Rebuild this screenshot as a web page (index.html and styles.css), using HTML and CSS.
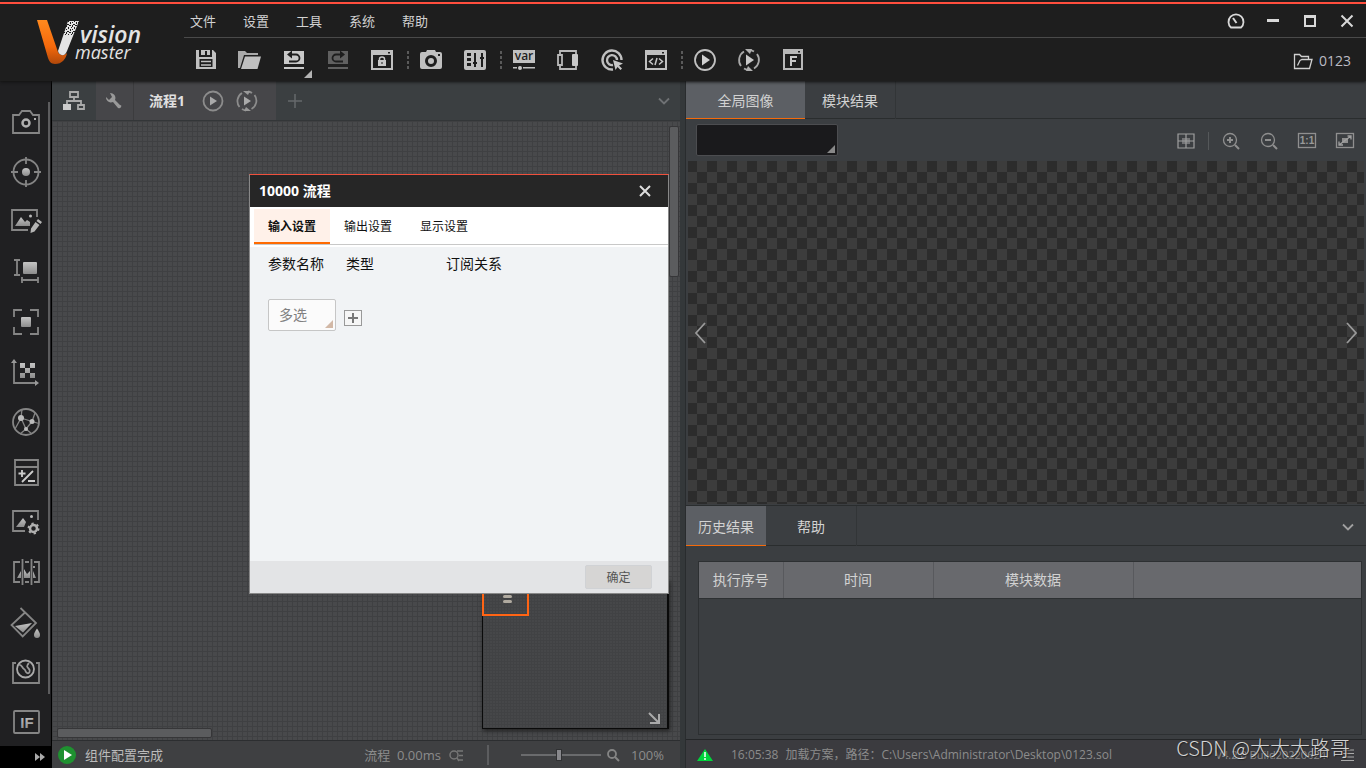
FILE: index.html
```html
<!DOCTYPE html>
<html lang="zh-CN">
<head>
<meta charset="utf-8">
<meta name="viewport" content="width=device-width, initial-scale=1">
<title>VisionMaster</title>
<link rel="stylesheet" href="styles.css">
</head>
<body>
<svg width="0" height="0" class="defs" aria-hidden="true">
  <defs>
    <linearGradient id="metal" x1="0" y1="0" x2="0" y2="1"><stop offset="0" stop-color="#c4c4c4"/><stop offset="1" stop-color="#8c8c8c"/></linearGradient>
    <linearGradient id="flame" x1="0" y1="0" x2="0" y2="1"><stop offset="0" stop-color="#ff8a1e"/><stop offset=".6" stop-color="#f5690c"/><stop offset="1" stop-color="#b0480a"/></linearGradient>
    <pattern id="grain" width="6" height="7" patternUnits="userSpaceOnUse"><path d="M0 0h1v2H0zM3 0h2v1H3zM5 2h1v1H5zM2 2h1v2H2zM0 4h1v1H0zM4 4h1v2H4zM1 6h2v1H1z" fill="#1e1e1e"/></pattern>
  </defs>
</svg>
<div class="app">
  <header class="header">
    <div class="brand">
      <svg class="logo" viewBox="0 0 112 50" role="img" aria-label="Vision Master">
        <path d="M1 2h10L22 34c2 4 6 4 9 1-1 6-5 11-12 11-4 0-6-3-7-6z" fill="url(#flame)"/>
        <path d="M32 3h11L31 33c-2 6-8 5-9 0z" fill="#e4e4e4"/>
        <path d="M32 2h12l-5 15H27z" fill="url(#grain)"/>
        <text x="44" y="25" class="logo-top">vision</text>
        <text x="39" y="41" class="logo-bottom">master</text>
      </svg>
    </div>
    <div class="header-main">
      <div class="menu-row">
        <nav class="menu" aria-label="主菜单">
          <button>文件</button><button>设置</button><button>工具</button><button>系统</button><button>帮助</button>
        </nav>
        <div class="window-buttons">
          <button aria-label="性能"><svg viewBox="0 0 20 20"><path d="M5 16.500A7.500 7.500 0 1 1 15 16.500z" fill="none" stroke="#d8d8d8" stroke-width="1.800"/><path d="M7 7l3.500 5" stroke="#d8d8d8" stroke-width="2"/></svg></button>
          <button aria-label="最小化"><svg viewBox="0 0 20 20"><path d="M4 8h12v3H4z" fill="#d8d8d8"/></svg></button>
          <button aria-label="最大化"><svg viewBox="0 0 20 20"><path d="M4 4h12v12H4zM6 7v7h8V7z" fill="#d8d8d8" fill-rule="evenodd"/></svg></button>
          <button aria-label="关闭"><svg viewBox="0 0 20 20"><path d="M4.500 4.500l11 11M15.500 4.500l-11 11" stroke="#d8d8d8" stroke-width="2"/></svg></button>
        </div>
      </div>
      <div class="tool-row">
        <div class="tools">
          <button aria-label="保存"><svg viewBox="0 0 24 24"><path d="M2 2h3v7h13V2h1l3 3v16H2z" fill="#c0c0c0"/><path d="M7 2h9v5h-3V3h-2v4H7z" fill="#c0c0c0"/><path d="M5.500 11h13v8h-13z" fill="#1e1e1e"/><path d="M7 13.500h10M7 17h10" stroke="#c0c0c0" stroke-width="1.500"/></svg></button>
          <button aria-label="打开"><svg viewBox="0 0 24 24"><path d="M0 3h7l2 2h11v2H6L2 20H0z" fill="#aaa"/><path d="M7 8.500h16L19.500 21H3z" fill="#c0c0c0"/></svg></button>
          <button class="has-corner" aria-label="撤销"><svg viewBox="0 0 24 24"><path d="M2 3h20v13H2zM2 19h20v2H2z" fill="#c8c8c8"/><path d="M9 6.500h5a3.500 3.500 0 0 1 0 7H7" fill="none" stroke="#1e1e1e" stroke-width="1.800"/><path d="M5 6.500l5-4v8z" fill="#1e1e1e"/></svg></button>
          <button aria-label="重做"><svg viewBox="0 0 24 24"><path d="M2 3h20v13H2zM2 19h20v2H2z" fill="#606060"/><path d="M15 6.500h-5a3.500 3.500 0 0 0 0 7h7" fill="none" stroke="#1e1e1e" stroke-width="1.800"/><path d="M19 6.500l-5-4v8z" fill="#1e1e1e"/></svg></button>
          <button aria-label="锁定"><svg viewBox="0 0 24 24"><path d="M1 2h22v20H1zM3 7v13h18V7zM18 4v1.500h2V4z" fill="#c0c0c0" fill-rule="evenodd"/><path d="M8 12h8v6H8z" fill="#c8c8c8"/><path d="M9.500 12v-1a2.500 2 0 0 1 5 0v1" stroke="#c8c8c8" stroke-width="1.500" fill="none"/><path d="M11.500 14h1v2h-1z" fill="#1e1e1e"/></svg></button>
          <i class="tool-sep"></i>
          <button aria-label="相机"><svg viewBox="0 0 24 24"><path d="M1 6q0-2 2-2h4l1-2h8l1 2h4q2 0 2 2v13q0 2-2 2H3q-2 0-2-2z" fill="#c0c0c0"/><circle cx="12" cy="13" r="4.500" fill="none" stroke="#1e1e1e" stroke-width="3"/><path d="M19 6h2v2h-2z" fill="#1e1e1e"/></svg></button>
          <button aria-label="控制器"><svg viewBox="0 0 24 24"><rect x="1" y="2" width="22" height="20" rx="2" fill="#c0c0c0"/><path d="M4 5h4v3H4zM4 10h4v3H4zM4 15h4v3H4z" fill="#1e1e1e"/><path d="M12 5v14M19 5v14M10 15h4M17 10h4" stroke="#1e1e1e" stroke-width="2"/></svg></button>
          <i class="tool-sep"></i>
          <button aria-label="变量"><svg viewBox="0 0 24 24"><path d="M1 2h22v13H1zM1 19h4v1.500H1zM11 19h12v1.500H11z" fill="#c0c0c0"/><circle cx="8" cy="20" r="2" fill="#c8c8c8"/><text x="12" y="12" class="glyph-var">var</text></svg></button>
          <button aria-label="通信"><svg viewBox="0 0 24 24"><path d="M2 7h4v10H2zM4 7V3h16v3M4 17v4h16v-3" fill="none" stroke="#b8b8b8" stroke-width="1.800"/><rect x="16" y="6" width="6" height="12" rx="1" fill="#c8c8c8"/></svg></button>
          <button aria-label="触发"><svg viewBox="0 0 24 24"><path d="M21.500 12A9.500 9.500 0 1 0 13 21.500M17 12a5 5 0 1 0-4 5" fill="none" stroke="#c0c0c0" stroke-width="2.400"/><path d="M13 12l10 3.500-4 2 3 3-1.500 1.500-3-3-2 3z" fill="#c8c8c8"/></svg></button>
          <button aria-label="脚本"><svg viewBox="0 0 24 24"><path d="M1 2h22v20H1zM3 7v13h18V7zM18 4v1.500h2V4z" fill="#c0c0c0" fill-rule="evenodd"/><path d="M9 10.500l-3.500 3L9 16.500M15 10.500l3.500 3-3.500 3M13 10l-2 7" fill="none" stroke="#c8c8c8" stroke-width="1.500"/></svg></button>
          <i class="tool-sep"></i>
          <button aria-label="单次运行"><svg viewBox="0 0 24 24"><circle cx="12" cy="12" r="10" fill="none" stroke="#c0c0c0" stroke-width="1.800"/><path d="M9 6.500l8 5.500-8 5.500z" fill="#d0d0d0"/></svg></button>
          <button aria-label="连续运行"><svg viewBox="0 0 24 24"><path d="M13 2.200a10 10 0 0 1 4 1.300M20 6a10 10 0 0 1-3 14.500M11 21.800a10 10 0 0 1-4-1.300M4 18A10 10 0 0 1 7 3.500" fill="none" stroke="#a8a8a8" stroke-width="1.800"/><path d="M8 1h7l-2 5zM16 23H9l2-5z" fill="#b0b0b0"/><path d="M9 6.500l8 5.500-8 5.500z" fill="#c8c8c8"/></svg></button>
          <button aria-label="前端界面"><svg viewBox="0 0 24 24"><path d="M2 1h20v21H2zM4 6v14h16V6zM17 3v1.500h2V3z" fill="#b8b8b8" fill-rule="evenodd"/><path d="M10 18V9h6M10 13h5" fill="none" stroke="#c8c8c8" stroke-width="2"/></svg></button>
        </div>
        <a href="#" class="project"><svg viewBox="0 0 20 18"><path d="M4.500 16.500H1.500v-14h5l2 2h7v3M4.500 16.500h12l2.500-9H9l-2 1-2.500 5" fill="none" stroke="#d0d0d0" stroke-width="1.300"/></svg>0123</a>
      </div>
    </div>
  </header>

  <aside class="sidebar">
    <div class="modules">
      <button aria-label="采集"><svg viewBox="0 0 32 32"><path d="M3 9h6l3-4h8l3 4h6v18H3z" class="ln"/><circle cx="16" cy="17" r="3.500" fill="none" stroke="#b0b0b0" stroke-width="2.500"/><path d="M24 12h2v2h-2z" fill="#b0b0b0"/></svg></button>
      <button aria-label="定位"><svg viewBox="0 0 32 32"><circle cx="16" cy="16" r="12.500" class="ln"/><path d="M16 1v7M16 24v7M1 16h7M24 16h7" class="ln"/><circle cx="16" cy="16" r="4" fill="url(#metal)"/></svg></button>
      <button aria-label="图像编辑"><svg viewBox="0 0 32 32"><path d="M27 11V4H2v20h16" class="ln"/><path d="M5 20l6-9 4 5 2-2 3 2v4z" fill="url(#metal)"/><circle cx="20.500" cy="10" r="1.500" fill="#bbb"/><path d="M28 13l4 3-1.500 2-4-3zM25.500 16l4 3-5 6.500-4 1.500.5-4.500z" fill="#b4b4b4"/></svg></button>
      <button aria-label="测量"><svg viewBox="0 0 32 32"><path d="M4 4h6M4 19h6M7 4v15M11 24h17M12 21v6M28 21v6" class="ln"/><rect x="13" y="6" width="14" height="12" rx="1" fill="url(#metal)"/></svg></button>
      <button aria-label="识别"><svg viewBox="0 0 32 32"><path d="M4 11V4h8M20 4h8v7M28 21v7h-8M12 28H4v-7" class="ln"/><rect x="11" y="11" width="10" height="10" rx="1" fill="url(#metal)"/></svg></button>
      <button aria-label="标定"><svg viewBox="0 0 32 32"><path d="M4 5v22h23" class="ln"/><path d="M1 7l3-4 3 4zM25 24l4 3-4 3z" fill="#999"/><path d="M10 7h5v5h-5zM20 7h5v5h-5zM15 12h5v5h-5zM10 17h5v5h-5zM20 17h5v5h-5z" fill="url(#metal)"/></svg></button>
      <button aria-label="深度学习"><svg viewBox="0 0 32 32"><circle cx="16" cy="16" r="13" class="ln"/><path d="M12 3l-1 9-6 11M11 12l11 3.500-6 7.500-5-11M22 15.500L25 7M22 15.500l7 2M16 23l-6 5M16 23l6 5" class="ln thin"/><circle cx="11" cy="12" r="3" fill="#bbb"/><circle cx="22" cy="15.500" r="2.500" fill="#bbb"/><circle cx="16" cy="23" r="2" fill="#bbb"/></svg></button>
      <button aria-label="运算"><svg viewBox="0 0 32 32"><path d="M5 4h23v25H5zM5 11h23" class="ln"/><path d="M8.500 17.500h7M12 14v7M12 26l11-11M18 25h7" stroke="#ccc" stroke-width="1.800" fill="none"/></svg></button>
      <button aria-label="图像处理"><svg viewBox="0 0 32 32"><path d="M28 14V5H3v20h12" class="ln"/><path d="M6 21l7-9 3 4-2 5z" fill="url(#metal)"/><circle cx="21.500" cy="10.500" r="1.500" fill="#bbb"/><circle cx="23.500" cy="22.500" r="3.500" fill="none" stroke="#b0b0b0" stroke-width="2.500"/><circle cx="23.500" cy="22.500" r="5" fill="none" stroke="#b0b0b0" stroke-width="2" stroke-dasharray="2.200 3.036"/></svg></button>
      <button aria-label="缺陷检测"><svg viewBox="0 0 32 32"><path d="M10 6H4v20h6M15 6h4M15 26h4M24 6h5v20h-5M12.500 3v26M21.500 3v26" class="ln"/><path d="M7 22l4-7v7zM14 22v-9l3 5 3-3v7zM23 22v-7l3 7z" fill="url(#metal)"/><circle cx="24" cy="11" r="1" fill="#bbb"/></svg></button>
      <button aria-label="颜色处理"><svg viewBox="0 0 32 32"><path d="M10.500 2L26 17 12.700 30.500 1.500 19 15 6.500" class="ln"/><path d="M5 20l17-3-9 9.500z" fill="url(#metal)"/><path d="M27 22.500c2 3 3 4.500 3 6.500a3 3 0 0 1-6 0c0-2 1-3.500 3-6.500z" fill="url(#metal)"/></svg></button>
      <button aria-label="逻辑工具"><svg viewBox="0 0 32 32"><path d="M6 7H3v20h26V7h-3" class="ln"/><circle cx="15.500" cy="13" r="8.500" fill="none" stroke="#aaa" stroke-width="1.800"/><path d="M9 9c3-1 3 3 5 4s1 3 3 4 4-2 2-4-3-3 0-6" fill="none" stroke="#999" stroke-width="1.800"/></svg></button>
      <button aria-label="条件分支"><svg viewBox="0 0 32 32"><rect x="4" y="5" width="25" height="22" rx="1" class="ln"/><text x="17" y="22" class="glyph-if">IF</text></svg></button>
    </div>
    <button class="expand" aria-label="展开"><svg viewBox="0 0 12 8"><path d="M1 0l5 4-5 4zM6 0l5 4-5 4z" fill="#aaa"/></svg></button>
    <div class="side-scroll"></div>
  </aside>

  <main class="workspace">
    <div class="flow-tabs">
      <button class="tree" aria-label="流程树"><svg viewBox="0 0 24 24"><path d="M8 3h8v5H8zM12 8v4M5 16v-4h14v4M16 16h6v4h-6z" fill="none" stroke="#aaa" stroke-width="1.800"/><path d="M1 15h8v6H1z" fill="#ccc"/></svg></button>
      <div class="flow-active">
        <button class="wrench" aria-label="设置"><svg viewBox="0 0 20 20"><path d="M3 6a5 5 0 0 0 7 5l5 6q2 1 3-1t-1-2l-5-5a5 5 0 0 0-5-7l2 4-3 3z" fill="#999"/></svg></button>
        <button class="flow-name">流程1</button>
        <button class="run" aria-label="运行"><svg viewBox="0 0 24 24"><circle cx="12" cy="12" r="9.500" fill="none" stroke="#8c8c8c" stroke-width="1.800"/><path d="M9 7.500l7 4.500-7 4.500z" fill="#aaa"/></svg></button>
        <button class="run" aria-label="循环运行"><svg viewBox="0 0 24 24"><path d="M13 2.500a9.500 9.500 0 0 1 4 1.500M19.500 6a9.500 9.500 0 0 1-3 14M11 21.500A9.500 9.500 0 0 1 7 20M4.500 18A9.500 9.500 0 0 1 7 4" fill="none" stroke="#8c8c8c" stroke-width="1.800"/><path d="M8 2h7l-2 4zM16 22H9l2-4z" fill="#999"/><path d="M9 7.500l7 4.500-7 4.500z" fill="#aaa"/></svg></button>
      </div>
      <button class="add" aria-label="新建流程"><svg viewBox="0 0 16 16"><path d="M8 1v14M1 8h14" stroke="#66696b" stroke-width="1.500"/></svg></button>
      <button class="more" aria-label="更多流程"><svg viewBox="0 0 14 14"><path d="M2 4.500l5 5 5-5" fill="none" stroke="#6f7274" stroke-width="1.800"/></svg></button>
    </div>
    <div class="canvas">
      <div class="bar-v"></div>
      <div class="bar-h"></div>
      <div class="minimap">
        <div class="viewport"><i></i><i></i></div>
        <svg class="shrink" viewBox="0 0 14 14"><path d="M2 2l9 9M12 3v9H3" fill="none" stroke="#aaa" stroke-width="2"/></svg>
      </div>
    </div>
    <footer class="flow-status">
      <svg class="ok" viewBox="0 0 20 20"><circle cx="10" cy="10" r="9" fill="#1f9130"/><path d="M7 5l8 5-8 5z" fill="#fff"/></svg>
      <span class="state">组件配置完成</span>
      <span class="timing">流程&nbsp; 0.00ms</span>
      <svg class="detail" viewBox="0 0 16 14"><circle cx="5" cy="7" r="4" fill="none" stroke="#777" stroke-width="1.500"/><path d="M8 10l2 3M8 3h6M10 7.500h4M10 12h4" stroke="#777" stroke-width="1.500"/></svg>
      <i class="bar"></i>
      <input type="range" min="0" max="100" value="47" aria-label="缩放">
      <svg class="lens" viewBox="0 0 14 14"><circle cx="6" cy="6" r="4" fill="none" stroke="#858585" stroke-width="1.800"/><path d="M9 9l4 4" stroke="#858585" stroke-width="2"/></svg>
      <span class="percent">100%</span>
    </footer>

    <section class="dialog" role="dialog" aria-labelledby="dlg-title">
      <header class="dialog-head"><h2 id="dlg-title">10000 流程</h2><button aria-label="关闭对话框"><svg viewBox="0 0 14 14"><path d="M2 2l10 10M12 2L2 12" stroke="#ddd" stroke-width="2"/></svg></button></header>
      <div class="dialog-tabs"><button class="on">输入设置</button><button>输出设置</button><button>显示设置</button></div>
      <div class="dialog-body">
        <div class="params"><span>参数名称</span><span>类型</span><span>订阅关系</span></div>
        <div class="pick">
          <div class="type-pick"><select aria-label="类型"><option>多选</option></select></div>
          <button class="plus" aria-label="添加参数"><svg viewBox="0 0 18 16"><rect x=".5" y=".5" width="17" height="15" fill="#f6f6f6" stroke="#999"/><path d="M9 3v10M4 8h10" stroke="#777" stroke-width="2"/></svg></button>
        </div>
      </div>
      <footer class="dialog-foot"><button>确定</button></footer>
    </section>
  </main>

  <section class="results">
    <div class="view-tabs"><button class="on">全局图像</button><button>模块结果</button></div>
    <div class="view-tools">
      <div class="source-pick"><select aria-label="图像源"><option></option></select></div>
      <div class="view-icons">
        <button aria-label="网格"><svg viewBox="0 0 20 18"><path d="M2 2h16v14H2zM10 2v14M2 9h16" fill="none" stroke="#a0a0a0" stroke-width="1.200"/><path d="M6 6h8v6H6z" fill="#999" opacity=".6"/></svg></button>
        <i class="vsep"></i>
        <button aria-label="放大"><svg viewBox="0 0 20 18"><circle cx="9" cy="8" r="6.500" fill="none" stroke="#8f8f8f" stroke-width="1.300"/><path d="M14 13l4 4M6 8h6M9 5v6" stroke="#8f8f8f" stroke-width="2"/></svg></button>
        <button aria-label="缩小"><svg viewBox="0 0 20 18"><circle cx="9" cy="8" r="6.500" fill="none" stroke="#8f8f8f" stroke-width="1.300"/><path d="M14 13l4 4M6 8h6" stroke="#8f8f8f" stroke-width="2"/></svg></button>
        <button aria-label="原始大小"><svg viewBox="0 0 20 18"><rect x="1.500" y="1.500" width="17" height="14" fill="none" stroke="#8f8f8f" stroke-width="1.300"/><text x="10" y="12" class="glyph-one">1:1</text></svg></button>
        <button aria-label="适应窗口"><svg viewBox="0 0 20 18"><rect x="1.500" y="1.500" width="17" height="14" fill="none" stroke="#8f8f8f" stroke-width="1.300"/><path d="M7 6h6v5H7z" fill="#8f8f8f"/><path d="M4 13L16 4M12.500 4H16v3.500M4 9.500V13h4" fill="none" stroke="#a0a0a0" stroke-width="1.300"/></svg></button>
      </div>
    </div>
    <div class="viewer">
      <button aria-label="上一张"><svg viewBox="0 0 14 24"><path d="M12 2L3 12l9 10" fill="none" stroke="#999" stroke-width="1.800"/></svg></button>
      <button aria-label="下一张"><svg viewBox="0 0 14 24"><path d="M2 2l9 10-9 10" fill="none" stroke="#999" stroke-width="1.800"/></svg></button>
    </div>
    <div class="log-tabs"><button class="on">历史结果</button><button>帮助</button><button class="fold" aria-label="折叠"><svg viewBox="0 0 14 14"><path d="M2 4.500l5 5 5-5" fill="none" stroke="#a0a0a0" stroke-width="1.800"/></svg></button></div>
    <div class="log">
      <table>
        <colgroup><col class="c1"><col class="c2"><col class="c3"><col></colgroup>
        <thead><tr><th>执行序号</th><th>时间</th><th>模块数据</th><th></th></tr></thead>
      </table>
    </div>
    <footer class="app-status">
      <svg class="alert" viewBox="0 0 16 14"><path d="M8 1l8 12H0z" fill="#00d43c"/><path d="M8 4v5M8 10v2" stroke="#fff" stroke-width="1.500"/></svg>
      <span class="log-time">16:05:38</span>
      <span class="log-text">加载方案，路径：C:\Users\Administrator\Desktop\0123.sol</span>
      <span class="version">V4.2.0 Build20220624</span>
      <svg class="list" viewBox="0 0 14 12"><path d="M3 1h11M3 4.500h11M3 8h11M1 11.500h13" stroke="#aaa" stroke-width="1.200"/></svg>
    </footer>
    <div class="watermark">CSDN @大大大路哥</div>
  </section>
</div>
</body>
</html>
```

FILE: styles.css
```css
* { box-sizing: border-box; }
body {
  margin: 0;
  background: #1e1e1e;
  color: #d2d2d2;
  font: 14px/20px "Open Sans", "Noto Sans CJK SC", sans-serif;
}
button, select, input { font: inherit; color: inherit; margin: 0; }
button { padding: 0; border: 0; background: none; }
svg { display: block; overflow: visible; }
.defs { position: absolute; }
.ln { fill: none; stroke: #858585; stroke-width: 1.8; }
.thin { stroke-width: 1.3; }

.app {
  display: grid;
  grid-template: 81px minmax(0, 1fr) / 52px minmax(0, 628fr) 6px minmax(0, 680fr);
  height: 100vh;
  min-height: 768px;
  background: #34383a;
  overflow: hidden;
}

/* header */
.header {
  grid-column: 1 / -1;
  display: flex;
  padding-top: 4px;
  background: linear-gradient(#1e1e1e 2px, #ff4e3d 2px, #ff4e3d 4px, #1e1e1e 4px);
  box-shadow: 0 1px 3px #111;
  z-index: 2;
}
.brand { width: 184px; padding: 14px 0 0 36px; }
.logo { width: 112px; height: 50px; fill: #e4e4e4; }
.logo-top { font-size: 23px; font-weight: 600; font-style: italic; }
.logo-bottom { font-size: 18px; font-style: italic; }
.header-main { flex: 1; display: flex; flex-direction: column; }
.menu-row {
  display: flex;
  justify-content: space-between;
  height: 34px;
  border-bottom: 1px solid #4a4a4a;
}
.menu { display: flex; font-size: 13px; }
.menu button { width: 53px; padding-left: 6px; text-align: left; }
.window-buttons { display: flex; padding-right: 1px; }
.window-buttons button { width: 37px; display: grid; place-items: center; }
.window-buttons svg { width: 20px; height: 20px; }
.tool-row { flex: 1; display: flex; justify-content: space-between; align-items: center; }
.tools { display: flex; align-items: center; }
.tools button { width: 44px; height: 42px; display: grid; place-items: center; }
.tools svg { width: 24px; height: 24px; }
.has-corner { position: relative; }
.has-corner::after {
  content: "";
  position: absolute;
  right: 4px;
  bottom: 3px;
  border: solid transparent;
  border-width: 4px;
  border-right-color: #b4b4b4;
  border-bottom-color: #b4b4b4;
}
.tool-sep {
  width: 5px;
  height: 18px;
  background: repeating-linear-gradient(#5a5a5a 0 3px, transparent 3px 5px) 3px 0 / 2px 100% no-repeat;
}
.project { display: flex; align-items: center; gap: 6px; padding: 2px 15px 0 0; color: #bcbcc4; text-decoration: none; }
.project svg { width: 20px; height: 18px; }
.glyph-var { font-size: 12px; font-weight: 600; text-anchor: middle; fill: #1e1e1e; }
.glyph-if { font: 700 15px "Liberation Sans", sans-serif; text-anchor: middle; fill: url(#metal); }
.glyph-one { font: 700 10px "Liberation Sans", sans-serif; text-anchor: middle; fill: #999; }

/* sidebar */
.sidebar {
  position: relative;
  display: flex;
  flex-direction: column;
  background: #202022;
  border-right: 1px solid #000;
}
.modules { flex: 1; display: flex; flex-direction: column; padding-top: 16px; overflow: hidden; }
.modules button { flex: none; height: 50px; display: grid; place-items: center; }
.modules svg { width: 32px; height: 32px; }
.expand { height: 22px; padding: 0 5px 0 0; background: #000; display: flex; justify-content: flex-end; align-items: center; }
.expand svg { width: 12px; height: 8px; }
.side-scroll { position: absolute; top: 21px; bottom: 74px; right: 1px; width: 2px; background: #5c5c5e; }

/* flow editor */
.workspace { position: relative; display: flex; flex-direction: column; }
.flow-tabs { display: flex; height: 40px; background: #3b3f41; border-bottom: 1px solid #333638; }
.flow-tabs button { display: grid; place-items: center; }
.tree { width: 44px; }
.tree svg, .run svg { width: 24px; height: 24px; }
.flow-active { display: flex; width: 180px; background: #464649; }
.flow-active .wrench { width: 38px; padding-right: 4px; border-right: 1px solid #3c3c3e; }
.wrench svg { width: 20px; height: 20px; }
.flow-active .flow-name { width: 62px; padding-left: 4px; font-weight: 700; color: #e0e0e0; }
.run { width: 34px; }
.add { width: 38px; }
.add svg { width: 16px; height: 16px; }
.more { width: 32px; margin-left: auto; }
.more svg { width: 14px; height: 14px; }
.canvas {
  position: relative;
  flex: 1;
  background:
    repeating-linear-gradient(90deg, #3f4042 0 1px, transparent 1px 5px),
    repeating-linear-gradient(#3f4042 0 1px, #48494b 1px 5px);
}
.bar-v, .bar-h { position: absolute; background: #5b5c5e; border: 1px solid #363638; border-radius: 2px; }
.bar-v { top: 5px; right: 1px; width: 10px; height: 151px; }
.bar-h { left: 5px; bottom: 2px; width: 155px; height: 10px; }
.minimap {
  position: absolute;
  right: 11px;
  bottom: 11px;
  width: 187px;
  height: 150px;
  border: 1px solid #0a0a0a;
  border-right-width: 2px;
  background:
    repeating-linear-gradient(90deg, #414244 0 1px, transparent 1px 3px),
    repeating-linear-gradient(#414244 0 1px, #464749 1px 3px);
  box-shadow: 1px 2px 4px #222;
}
.viewport { width: 47px; height: 36px; margin-left: -1px; border: 2px solid #ff6414; padding: 13px 0 0 19px; }
.viewport i { display: block; width: 9px; height: 3px; margin-bottom: 2px; border-radius: 2px; background: #b0aaa0; }
.shrink { position: absolute; right: 6px; bottom: 3px; width: 14px; height: 14px; }
.flow-status {
  display: flex;
  align-items: center;
  height: 28px;
  padding: 0 16px 0 5px;
  border-top: 1px solid #2c2e30;
  background: #3f4042;
  font-size: 13px;
  color: #8c8c8c;
}
.ok { width: 20px; height: 20px; }
.state { margin-left: 8px; color: #bbb; }
.timing { margin-left: auto; }
.detail { width: 16px; height: 14px; margin-left: 8px; }
.bar { width: 2px; height: 20px; margin: 0 32px 0 22px; background: #5c5d5f; }
.flow-status input {
  appearance: none;
  width: 80px;
  height: 12px;
  background: linear-gradient(#6a6b6d, #6a6b6d) 0 5px / 100% 2px no-repeat;
}
.flow-status input::-webkit-slider-thumb {
  appearance: none;
  width: 6px;
  height: 12px;
  background: #88888c;
  border: 1px solid #303133;
}
.lens { width: 14px; height: 14px; margin: 0 11px 0 5px; }

/* dialog */
.dialog {
  position: absolute;
  top: 93px;
  left: 197px;
  display: flex;
  flex-direction: column;
  width: 420px;
  height: 420px;
  border: 1px solid #888;
  border-top: 1px solid #f0503c;
  background: #f1f3f5;
  color: #111;
}
.dialog-head {
  display: flex;
  justify-content: space-between;
  align-items: center;
  height: 32px;
  padding: 0 16px 0 9px;
  background: #262626;
  color: #fff;
}
.dialog-head h2 { margin: 0; font-size: 14px; font-weight: 700; }
.dialog-head svg { width: 14px; height: 14px; }
.dialog-tabs {
  display: flex;
  height: 40px;
  padding: 2px 0 2px 4px;
  background: linear-gradient(#c8c8c8, #c8c8c8) 4px 37px / 100% 1px no-repeat #fff;
  font-size: 12px;
}
.dialog-tabs button { width: 76px; height: 35px; padding-top: 2px; border-bottom: 2px solid transparent; }
.dialog-tabs .on { background: #fff1e9; border-bottom-color: #ff6a00; font-weight: 700; }
.dialog-body { flex: 1; padding: 7px 18px; }
.params { display: grid; grid-template-columns: 78px 100px 1fr; }
.pick { display: flex; align-items: center; gap: 8px; margin-top: 25px; }
.type-pick, .source-pick { position: relative; }
.type-pick::after, .source-pick::after {
  content: "";
  position: absolute;
  right: 3px;
  bottom: 3px;
  border: 4px solid transparent;
  border-right-color: #d2b8a6;
  border-bottom-color: #d2b8a6;
  pointer-events: none;
}
.source-pick::after { border-right-color: #888; border-bottom-color: #888; }
.type-pick select {
  display: block;
  appearance: none;
  width: 68px;
  height: 32px;
  padding: 0 10px;
  border: 1px solid #c6c6c6;
  border-radius: 2px;
  background: #fbfbfb;
  color: #808080;
}
.plus { margin-top: 6px; }
.plus svg { width: 18px; height: 16px; }
.dialog-foot { display: flex; justify-content: flex-end; height: 32px; padding: 4px 16px 4px 0; background: #e3e4e6; font-size: 12px; }
.dialog-foot button { width: 67px; padding-top: 2px; background: #d6d5d4; border: 1px solid #d0d2d5; border-radius: 2px; color: #555; }

/* results */
.results { grid-column: 4; position: relative; display: flex; flex-direction: column; background: #3b3e41; box-shadow: -1px 0 #292c2e; }
.view-tabs, .log-tabs { display: flex; border-bottom: 1px solid #2a2d2e; }
.view-tabs { height: 38px; }
.log-tabs { height: 40px; margin-top: 2px; box-shadow: 0 -1px #2a2d2e; }
.view-tabs button, .log-tabs button { width: 91px; margin-bottom: -1px; padding-top: 2px; border-right: 1px solid #323537; }
.view-tabs .on { width: 119px; }
.log-tabs .on { width: 80px; }
.view-tabs .on, .log-tabs .on { background: #5c5f64; border-right: 0; border-bottom: 1px solid #f56a0a; }
.log-tabs button.fold { width: 36px; margin-left: auto; border: 0; display: grid; place-items: center; }
.fold svg { width: 14px; height: 14px; }
.view-tools { display: flex; justify-content: space-between; align-items: center; height: 42px; padding: 0 11px 0 10px; }
.source-pick select {
  display: block;
  appearance: none;
  width: 142px;
  height: 32px;
  border: 1px solid #4c4d50;
  border-radius: 2px;
  background: #1a1a1c;
}
.view-icons { display: flex; align-items: center; gap: 18px; padding-top: 2px; }
.view-icons svg { width: 20px; height: 18px; }
.vsep { width: 1px; height: 18px; margin: 0 -6px; background: #55585a; }
.viewer {
  flex: 1;
  display: flex;
  justify-content: space-between;
  align-items: center;
  margin: 0 2px;
  padding: 0 5px;
  background: conic-gradient(#3c3c3c 25%, #2c2c2c 0 50%, #3c3c3c 0 75%, #2c2c2c 0) -1px 0 / 20px 22px;
}
.viewer svg { width: 14px; height: 24px; }
.log { height: 174px; margin: 15px 4px 4px 12px; border: 1px solid #2d3032; }
.log table { width: 100%; border-collapse: collapse; table-layout: fixed; }
.log th { height: 36px; padding: 0; background: #68696d; border-right: 1px solid #58595d; border-bottom: 1px solid #2d3032; font-weight: 400; }
.log th:last-child { border-right: 0; }
.c1 { width: 84px; }
.c2 { width: 150px; }
.c3 { width: 200px; }
.app-status {
  display: flex;
  align-items: center;
  height: 29px;
  padding: 2px 12px 0 11px;
  border-top: 1px solid #242628;
  background: #3b3b3f;
  font-size: 12px;
  color: #8c8c8c;
  white-space: nowrap;
}
.alert { width: 16px; height: 14px; }
.log-time { margin: 0 7px 0 18px; }
.version { margin-left: auto; font-size: 11px; }
.list { width: 14px; height: 12px; margin-left: 14px; }
.watermark {
  position: absolute;
  right: 16px;
  bottom: 8px;
  font: 300 20px/24px "Noto Sans CJK SC", sans-serif;
  color: #d4d4d4;
  text-shadow: 1px 1px 1px #222;
}
```
